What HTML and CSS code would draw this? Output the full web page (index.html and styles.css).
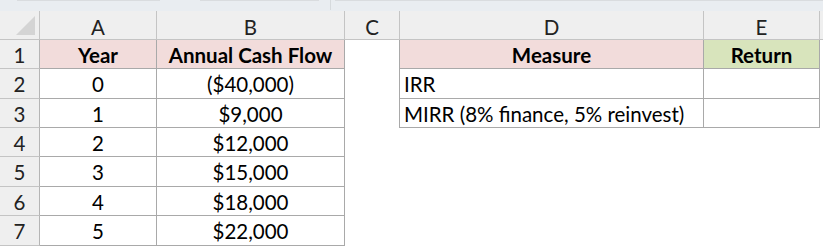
FILE: index.html
```html
<!DOCTYPE html>
<html>
<head>
<meta charset="utf-8">
<link rel="stylesheet" href="styles.css">
</head>
<body>
<div class="topbar">
  <div class="seg seg1"></div>
  <div class="seg seg2"></div>
  <div class="divider"></div>
  <div class="seg seg3"></div>
</div>
<div class="sheet">
  <div class="corner"><svg width="20" height="20" viewBox="0 0 20 20"><polygon points="0,19 19,0 19,19" fill="#d4d4d4"/></svg></div>
  <div class="ch">A</div>
  <div class="ch">B</div>
  <div class="ch">C</div>
  <div class="ch">D</div>
  <div class="ch">E</div>
  <div class="ch last"></div>

  <div class="rh">1</div>
  <div class="c b pink bold center">Year</div>
  <div class="c b pink bold center">Annual Cash Flow</div>
  <div class="c bl"></div>
  <div class="c b pink bold center">Measure</div>
  <div class="c b green bold center">Return</div>
  <div class="c"></div>

  <div class="rh">2</div>
  <div class="c b center">0</div>
  <div class="c b center">($40,000)</div>
  <div class="c bl"></div>
  <div class="c b left">IRR</div>
  <div class="c b"></div>
  <div class="c"></div>

  <div class="rh">3</div>
  <div class="c b center">1</div>
  <div class="c b center">$9,000</div>
  <div class="c bl"></div>
  <div class="c b left">MIRR (8% finance, 5% reinvest)</div>
  <div class="c b"></div>
  <div class="c"></div>

  <div class="rh">4</div>
  <div class="c b center">2</div>
  <div class="c b center">$12,000</div>
  <div class="c"></div>
  <div class="c"></div>
  <div class="c"></div>
  <div class="c"></div>

  <div class="rh">5</div>
  <div class="c b center">3</div>
  <div class="c b center">$15,000</div>
  <div class="c"></div>
  <div class="c"></div>
  <div class="c"></div>
  <div class="c"></div>

  <div class="rh">6</div>
  <div class="c b center">4</div>
  <div class="c b center">$18,000</div>
  <div class="c"></div>
  <div class="c"></div>
  <div class="c"></div>
  <div class="c"></div>

  <div class="rh">7</div>
  <div class="c b center">5</div>
  <div class="c b center">$22,000</div>
  <div class="c"></div>
  <div class="c"></div>
  <div class="c"></div>
  <div class="c"></div>
</div>
</body>
</html>
```
FILE: styles.css
```css
html, body {
  margin: 0;
  padding: 0;
  background: #ffffff;
  overflow: hidden;
}
body {
  width: 823px;
  height: 248px;
  font-family: Lato, "Open Sans", sans-serif;
  font-size: 20.5px;
  color: #000;
}
.topbar {
  height: 11px;
  background: #e9edf1;
  display: flex;
  align-items: flex-start;
  box-sizing: border-box;
}
.seg {
  height: 1px;
  background: #d9dcdf;
}
.seg1 { margin-left: 17px; width: 143px; }
.seg2 { margin-left: 40px; width: 119px; }
.divider {
  margin-left: 11px;
  width: 1px;
  height: 10px;
  background: #d6dadd;
}
.seg3 { margin-left: 4px; flex: 1; }
.sheet {
  display: grid;
  grid-template-columns: 40px 117px 188px 55px 304px 116px 3px;
  grid-template-rows: 29px 29px 30px 29px 29px 30px 29px 30px;
}
.corner {
  background: #efefef;
  border-right: 1px solid #c4c4c4;
  border-bottom: 1px solid #c4c4c4;
  box-sizing: border-box;
  display: flex;
  align-items: flex-start;
  justify-content: flex-start;
  padding: 5px 0 0 16px;
}
.corner svg { display: block; }
.ch {
  background: #efefef;
  border-right: 1px solid #c4c4c4;
  border-bottom: 1px solid #c4c4c4;
  box-sizing: border-box;
  display: flex;
  align-items: center;
  justify-content: center;
  padding-top: 3px;
  color: #222;
}
.ch.last { border-right: none; }
.rh {
  background: #efefef;
  border-right: 1px solid #b5b5b5;
  border-bottom: 1px solid #c4c4c4;
  box-sizing: border-box;
  display: flex;
  align-items: center;
  justify-content: center;
  padding-top: 1px;
  color: #222;
}
.c {
  box-sizing: border-box;
  display: flex;
  align-items: center;
  padding-top: 1px;
  white-space: nowrap;
  overflow: hidden;
}
.b {
  border-right: 1px solid #a9a9a9;
  border-bottom: 1px solid #a9a9a9;
}
.bl { border-right: 1px solid #a9a9a9; }
.center { justify-content: center; }
.left { justify-content: flex-start; padding-left: 4px; }
.bold { font-weight: 700; }
.pink { background: #f2dcdb; }
.green { background: #d8e4bc; }
```
